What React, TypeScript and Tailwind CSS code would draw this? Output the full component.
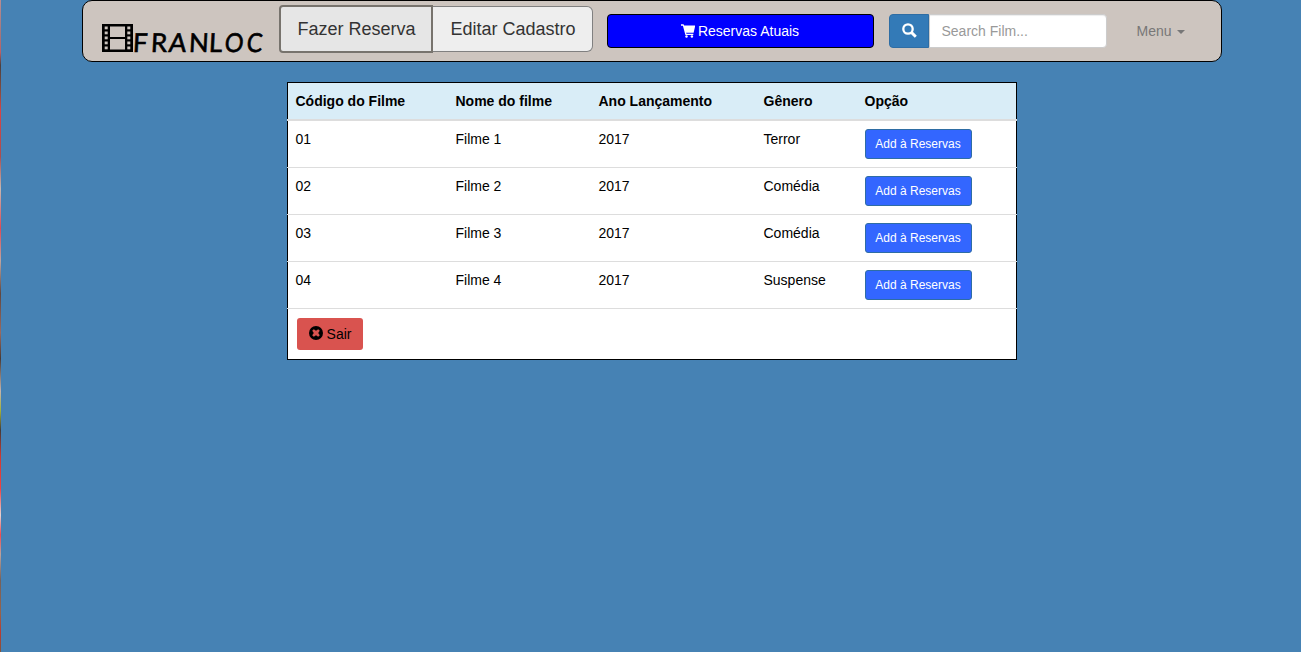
const films = [
  ["01", "Filme 1", "2017", "Terror"],
  ["02", "Filme 2", "2017", "Comédia"],
  ["03", "Filme 3", "2017", "Comédia"],
  ["04", "Filme 4", "2017", "Suspense"],
];

function FilmIcon() {
  return (
    <svg width="31" height="28" viewBox="0 0 31 28" className="mt-[23px] shrink-0">
      <rect width="31" height="28" fill="#000" />
      <rect x="8" y="2.5" width="15" height="10.5" fill="#cdc5bf" />
      <rect x="8" y="15" width="15" height="10.5" fill="#cdc5bf" />
      {[2.5, 7.5, 12.5, 17.5, 22.5].map((y) => (
        <g key={y} fill="#cdc5bf">
          <rect x="2.7" y={y} width="3" height="2.8" />
          <rect x="25.3" y={y} width="3" height="2.8" />
        </g>
      ))}
    </svg>
  );
}

function CartIcon() {
  return (
    <svg width="14" height="14" viewBox="0 0 14 14" className="mr-[3px]" fill="#fff">
      <path d="M0 .3h2.5l.7 1.3H14v1.2l-1.4 6H5l.5 1h6.8v1.3H4.4L1.9 1.7H0z" />
      <circle cx="5.5" cy="12.5" r="1.2" />
      <circle cx="10.9" cy="12.5" r="1.2" />
    </svg>
  );
}

function SearchIcon() {
  return (
    <svg width="15" height="15" viewBox="0 0 15 15" fill="none" stroke="#fff" className="-mt-[2px]">
      <circle cx="6" cy="6" r="4.7" strokeWidth="2.3" />
      <path d="M9.4 9.4l4.4 4.4" strokeWidth="2.9" />
    </svg>
  );
}

function RemoveIcon() {
  return (
    <svg width="14" height="14" viewBox="0 0 14 14" className="-mt-[2px] mr-1">
      <circle cx="7" cy="7" r="7" fill="#000" />
      <path
        d="M4.8 3.2L7 4.8 9.2 3.2 10.8 4.8 9.2 7l1.6 2.2-1.6 1.6L7 9.2l-2.2 1.6-1.6-1.6L4.8 7 3.2 4.8z"
        fill="#d9534f"
      />
    </svg>
  );
}

function Logo() {
  return (
    <div className="flex h-[60px] w-[178px] pl-[19px]">
      <FilmIcon />
      <div className="mt-[23px] flex h-[37px] font-['Lato'] text-[26px] leading-[37px] text-black [-webkit-text-stroke:0.6px_black]">
        <span className="w-[18px] -skew-x-3">F</span>
        <span className="w-[18px] -skew-x-3">R</span>
        <span className="w-[20px] -skew-x-6">A</span>
        <span className="w-[20px] -skew-x-3">N</span>
        <span className="w-[16px] -skew-x-3">L</span>
        <span className="w-[22px] origin-left scale-x-90 -skew-x-6">O</span>
        <span className="w-[18px] origin-left scale-x-90 -skew-x-6">C</span>
      </div>
    </div>
  );
}

export default function App() {
  return (
    <div className="flex h-[652px] w-full overflow-hidden bg-[#4682b4] font-['Liberation_Sans',Arial,sans-serif] text-sm leading-5 text-black">
      <div className="w-px shrink-0 bg-[linear-gradient(#b98c91,#a4777c_5%,#bc6065_8%,#4a4040_10%,#884d3f_14%,#d94345_17%,#a94f50_24%,#c7b7b1_29%,#df4b55_35%,#bfa5a0_40%,#604740_45%,#9a6a60_51%,#493a35_55%,#c4b4ac_60%,#a3b038_63%,#433b38_66%,#ce3a32_70%,#f04343_75%,#e5d2d2_79%,#f04b50_82%,#bba29d_85%,#75615b_89%,#986349_94%,#b93b32_97%,#80563e)]" />
      <main className="w-full">
        <header className="ml-[81px] flex h-[62px] w-[1140px] rounded-[10px] border border-black bg-[#cdc5bf]">
          <Logo />
          <nav className="mt-[5px] ml-[18px] flex h-[46px] text-lg leading-6 text-[#333]">
            <button className="-mt-px h-[48px] w-[154px] rounded-l-[4px] border-2 border-[#77736d] bg-[#e6e6e6] pb-px pl-px">
              Fazer Reserva
            </button>
            <button className="h-[46px] w-[160px] rounded-r-[6px] border border-l-0 border-[#808080] bg-[#eee] pl-px">
              Editar Cadastro
            </button>
          </nav>
          <button className="mt-[13px] ml-[14px] flex h-[34px] w-[267px] items-center justify-center rounded-[4px] border border-black bg-[#00f] pr-px text-white">
            <CartIcon />
            Reservas Atuais
          </button>
          <div className="mt-[13px] ml-[15px] flex h-[34px]">
            <button className="flex w-[40px] items-center justify-center rounded-l-[4px] border border-[#2e6da4] bg-[#337ab7]">
              <SearchIcon />
            </button>
            <input
              placeholder="Search Film..."
              className="w-[178px] rounded-r-[4px] border border-[#ccc] bg-white pl-[11.5px] text-sm shadow-[inset_0_1px_1px_rgba(0,0,0,0.075)] placeholder:text-[#999]"
            />
          </div>
          <a className="mt-[20px] ml-[29.5px] flex h-5 items-center text-[#777]">
            Menu
            <span className="mt-[2px] ml-[5px] border-x-4 border-t-4 border-x-transparent border-t-[#777]" />
          </a>
        </header>
        <table className="mt-5 ml-[286px] w-[730px] table-fixed border-collapse border border-black bg-white">
          <colgroup>
            <col className="w-[160px]" />
            <col className="w-[143px]" />
            <col className="w-[165px]" />
            <col className="w-[101px]" />
            <col />
          </colgroup>
          <thead>
            <tr className="h-[37px] border-b-2 border-[#ddd] bg-[#d9edf7] text-left">
              {["Código do Filme", "Nome do filme", "Ano Lançamento", "Gênero", "Opção"].map((title) => (
                <th key={title} className="px-2 pt-px pb-0 font-bold first:pl-[7.5px]">{title}</th>
              ))}
            </tr>
          </thead>
          <tbody>
            {films.map((film) => (
              <tr key={film[0]} className="h-[47px] border-b border-[#ddd] first:h-[48px]">
                {film.map((value, index) => (
                  <td key={index} className="px-2 pt-2 align-top first:pl-[7.5px]">{value}</td>
                ))}
                <td className="px-2 pt-2 align-top">
                  <button className="block h-[30px] w-[107px] rounded-[3px] border border-[#2e6da4] bg-[#36f] text-xs leading-[18px] text-white">
                    Add à Reservas
                  </button>
                </td>
              </tr>
            ))}
            <tr className="h-[51px]">
              <td colSpan={5} className="px-[9px] pt-[9px] align-top">
                <button className="flex h-8 w-[66px] items-center justify-center rounded-[3px] bg-[#d9534f]">
                  <RemoveIcon />
                  Sair
                </button>
              </td>
            </tr>
          </tbody>
        </table>
      </main>
    </div>
  );
}
